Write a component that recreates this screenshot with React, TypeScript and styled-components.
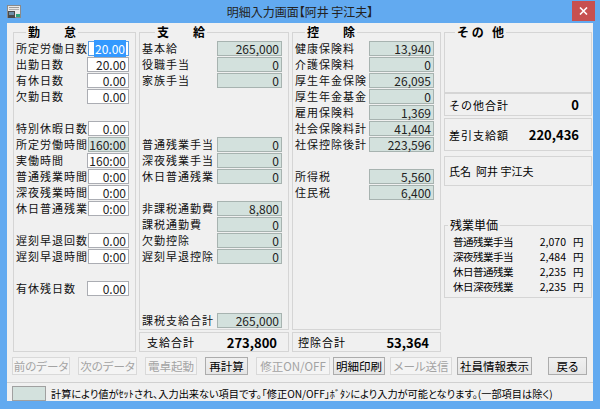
import React from 'react';
import styled, { createGlobalStyle } from 'styled-components';

type Item = { label: string; value: string; ro?: boolean; focus?: boolean } | null;

const kintai: Item[] = [
  { label: '所定労働日数', value: '20.00', focus: true },
  { label: '出勤日数', value: '20.00' },
  { label: '有休日数', value: '0.00' },
  { label: '欠勤日数', value: '0.00' },
  null,
  { label: '特別休暇日数', value: '0.00' },
  { label: '所定労働時間', value: '160:00', ro: true },
  { label: '実働時間', value: '160:00' },
  { label: '普通残業時間', value: '0:00' },
  { label: '深夜残業時間', value: '0:00' },
  { label: '休日普通残業', value: '0:00' },
  null,
  { label: '遅刻早退回数', value: '0.00' },
  { label: '遅刻早退時間', value: '0:00' },
  null,
  { label: '有休残日数', value: '0.00' },
];

const shikyu: Item[] = [
  { label: '基本給', value: '265,000', ro: true },
  { label: '役職手当', value: '0', ro: true },
  { label: '家族手当', value: '0', ro: true },
  null,
  null,
  null,
  { label: '普通残業手当', value: '0', ro: true },
  { label: '深夜残業手当', value: '0', ro: true },
  { label: '休日普通残業', value: '0', ro: true },
  null,
  { label: '非課税通勤費', value: '8,800', ro: true },
  { label: '課税通勤費', value: '0', ro: true },
  { label: '欠勤控除', value: '0', ro: true },
  { label: '遅刻早退控除', value: '0', ro: true },
  null,
  null,
  null,
  { label: '課税支給合計', value: '265,000', ro: true },
];

const kojo: Item[] = [
  { label: '健康保険料', value: '13,940', ro: true },
  { label: '介護保険料', value: '0', ro: true },
  { label: '厚生年金保険', value: '26,095', ro: true },
  { label: '厚生年金基金', value: '0', ro: true },
  { label: '雇用保険料', value: '1,369', ro: true },
  { label: '社会保険料計', value: '41,404', ro: true },
  { label: '社保控除後計', value: '223,596', ro: true },
  null,
  { label: '所得税', value: '5,560', ro: true },
  { label: '住民税', value: '6,400', ro: true },
];

const tanka = [
  { label: '普通残業手当', value: '2,070' },
  { label: '深夜残業手当', value: '2,484' },
  { label: '休日普通残業', value: '2,235' },
  { label: '休日深夜残業', value: '2,235' },
];

const buttons = [
  { label: '前のデータ', w: 58, ml: 5, disabled: true },
  { label: '次のデータ', w: 59, ml: 8, disabled: true },
  { label: '電卓起動', w: 52, ml: 8, disabled: true },
  { label: '再計算', w: 43, ml: 8 },
  { label: '修正ON/OFF', w: 74, ml: 8, disabled: true },
  { label: '明細印刷', w: 52, ml: 3 },
  { label: 'メール送信', w: 62, ml: 5, disabled: true },
  { label: '社員情報表示', w: 75, ml: 5 },
  { label: '戻る', w: 39, ml: 16 },
];

const GlobalStyle = createGlobalStyle`
  * { box-sizing: border-box; }
  html, body {
    margin: 0;
    padding: 0;
    background: #62aaf0;
  }
  body {
    font-family: "Noto Sans CJK JP", "Noto Sans", sans-serif;
    color: #000;
  }
`;

const Window = styled.div`
  width: 600px;
  height: 409px;
  background: #62aaf0;
  display: flex;
  flex-direction: column;
`;

const TitleBar = styled.div`
  height: 23px;
  display: grid;
  grid-template-columns: 1fr auto 1fr;
  align-items: center;
`;

const AppIcon = styled.svg`
  margin-left: 7px;
  display: block;
`;

const Title = styled.div`
  font-size: 12px;
  line-height: 16px;
  color: #222;
  white-space: pre;
  font-feature-settings: "palt";
`;

const CloseButton = styled.div`
  justify-self: end;
  align-self: start;
  width: 23px;
  height: 20px;
  margin-right: 5px;
  margin-top: 1px;
  background: #c75050;
  display: flex;
  align-items: center;
  justify-content: center;
`;

const Client = styled.div`
  flex: 1;
  margin: 0 7px 8px;
  background: #f0f0f0;
  display: flex;
  flex-direction: column;
`;

const Main = styled.div`
  display: flex;
  gap: 3px;
  height: 329px;
  padding: 2px 0 0 6px;
`;

const Column = styled.div<{ $w: number }>`
  width: ${p => p.$w}px;
  flex-shrink: 0;
  display: flex;
  flex-direction: column;
`;

const Group = styled.fieldset<{ $h?: number; $mt?: number }>`
  margin: ${p => p.$mt ?? 0}px 0 0;
  padding: 2px 6px 0 2px;
  border: 1px solid #d5d5d5;
  min-width: 0;
  ${p => (p.$h ? `height: ${p.$h}px; flex: none;` : 'flex: 1;')}
`;

const Legend = styled.legend<{ $ml: number; $plain?: boolean }>`
  margin-left: ${p => p.$ml}px;
  padding: 0 2px;
  font-size: 12px;
  line-height: 14px;
  font-weight: ${p => (p.$plain ? 400 : 700)};
  white-space: pre;
`;

const Row = styled.div`
  display: flex;
  align-items: center;
  justify-content: space-between;
  height: 15px;
  margin-bottom: 1px;
`;

const Spacer = styled.div`
  height: 16px;
`;

const Label = styled.span`
  font-size: 11px;
  letter-spacing: 1px;
  line-height: 15px;
  white-space: nowrap;
  color: #111;
`;

const Field = styled.div<{ $w: number; $ro?: boolean; $focus?: boolean }>`
  width: ${p => p.$w}px;
  height: 15px;
  border: 1px solid ${p => (p.$focus ? '#569de5' : p.$ro ? '#a7b3b0' : '#abadb3')};
  background: ${p => (p.$ro ? '#d3e1dd' : '#fff')};
  text-align: right;
  font-size: 12px;
  line-height: 13px;
  padding-right: 2px;
  color: #222;
  white-space: nowrap;
`;

const Selected = styled.span`
  background: #3399ff;
  color: #fff;
  padding: 0 1px;
`;

const TotalPanel = styled.div<{ $pl: number }>`
  height: 20px;
  margin-top: 2px;
  border: 1px solid #d5d5d5;
  display: flex;
  align-items: center;
  justify-content: space-between;
  padding: 0 11px 0 ${p => p.$pl}px;
  font-size: 11px;
  letter-spacing: 1px;
`;

const InfoPanel = styled.div<{ $h: number; $mt: number }>`
  height: ${p => p.$h}px;
  margin-top: ${p => p.$mt}px;
  border: 1px solid #d5d5d5;
  display: flex;
  align-items: center;
  justify-content: space-between;
  padding: 0 12px 0 4px;
  font-size: 11px;
  letter-spacing: 1px;
  white-space: pre;
`;

const NameText = styled.span`
  font-size: 11px;
  letter-spacing: 0;
  white-space: pre;
`;

const TotalValue = styled.span`
  font-size: 13px;
  font-weight: 700;
  letter-spacing: 0;
`;

const RateRow = styled.div`
  display: grid;
  grid-template-columns: 1fr auto 12px;
  column-gap: 7px;
  align-items: center;
  height: 15px;
  padding-left: 6px;
  font-size: 10.5px;
  letter-spacing: -0.5px;
`;

const RateValue = styled.span`
  letter-spacing: 0;
`;

const ButtonBar = styled.div`
  display: flex;
  height: 18px;
  margin-top: 5px;
`;

const Btn = styled.button<{ $w: number; $ml: number }>`
  width: ${p => p.$w}px;
  height: 18px;
  margin-left: ${p => p.$ml}px;
  padding: 0;
  font-family: inherit;
  font-size: 11.5px;
  line-height: 16px;
  font-feature-settings: "palt";
  white-space: nowrap;
  color: #000;
  border: 1px solid #acacac;
  background: linear-gradient(#f0f0f0, #e5e5e5);

  &:disabled {
    color: #a3a3a3;
    border-color: #d9d9d9;
    background: #f4f4f4;
  }
`;

const StatusBar = styled.div`
  flex: 1;
  margin-top: 7px;
  border-top: 1px solid #d0d0d0;
  display: flex;
  align-items: flex-start;
  padding: 3px 0 0 5px;
`;

const Swatch = styled.div`
  width: 34px;
  height: 15px;
  background: #d3e1dd;
  border: 1px solid #a0a0a0;
`;

const StatusText = styled.span`
  margin-left: 5px;
  font-size: 10.2px;
  line-height: 15px;
  font-feature-settings: "palt";
  white-space: nowrap;
`;

const ItemRows: React.FC<{ items: Item[]; w: number }> = ({ items, w }) => (
  <>
    {items.map((it, i) =>
      it ? (
        <Row key={i}>
          <Label>{it.label}</Label>
          <Field $w={w} $ro={it.ro} $focus={it.focus}>
            {it.focus ? <Selected>{it.value}</Selected> : it.value}
          </Field>
        </Row>
      ) : (
        <Spacer key={i} />
      )
    )}
  </>
);

const App: React.FC = () => (
  <>
    <GlobalStyle />
    <Window>
      <TitleBar>
        <AppIcon width="14" height="14" viewBox="0 0 14 14">
          <rect x="0.5" y="0.5" width="13" height="12" fill="#e8e8e8" stroke="#8a8a8a" />
          <rect x="2" y="2" width="10" height="1" fill="#9a9a9a" />
          <rect x="2" y="4" width="10" height="1" fill="#b0b0b0" />
          <rect x="1" y="6" width="7" height="7" fill="#4a4a4a" />
          <rect x="2" y="7" width="5" height="3" fill="#6c8ea8" />
          <rect x="9" y="9" width="4" height="3" fill="#2fa37a" />
        </AppIcon>
        <Title>明細入力画面【阿井 宇江夫】</Title>
        <CloseButton>
          <svg width="9" height="8" viewBox="0 0 9 8">
            <path d="M1 0.5 L8 7.5 M8 0.5 L1 7.5" stroke="#fff" strokeWidth="1.6" />
          </svg>
        </CloseButton>
      </TitleBar>
      <Client>
        <Main>
          <Column $w={123}>
            <Group>
              <Legend $ml={10}>{'勤　　怠'}</Legend>
              <ItemRows items={kintai} w={42} />
            </Group>
          </Column>
          <Column $w={150}>
            <Group>
              <Legend $ml={13}>{'支　　給'}</Legend>
              <ItemRows items={shikyu} w={65} />
            </Group>
            <TotalPanel $pl={7}>
              <span>支給合計</span>
              <TotalValue>273,800</TotalValue>
            </TotalPanel>
          </Column>
          <Column $w={149}>
            <Group>
              <Legend $ml={10}>{'控　　除'}</Legend>
              <ItemRows items={kojo} w={65} />
            </Group>
            <TotalPanel $pl={5}>
              <span>控除合計</span>
              <TotalValue>53,364</TotalValue>
            </TotalPanel>
          </Column>
          <Column $w={148}>
            <Group $h={68}>
              <Legend $ml={8}>{'そ の   他'}</Legend>
            </Group>
            <InfoPanel $h={23} $mt={0}>
              <span>その他合計</span>
              <TotalValue>0</TotalValue>
            </InfoPanel>
            <InfoPanel $h={33} $mt={2}>
              <span>差引支給額</span>
              <TotalValue>220,436</TotalValue>
            </InfoPanel>
            <InfoPanel $h={30} $mt={5}>
              <NameText>{'氏名  阿井 宇江夫'}</NameText>
            </InfoPanel>
            <Group $h={80} $mt={32}>
              <Legend $ml={1} $plain>残業単価</Legend>
              {tanka.map(r => (
                <RateRow key={r.label}>
                  <span>{r.label}</span>
                  <RateValue>{r.value}</RateValue>
                  <span>円</span>
                </RateRow>
              ))}
            </Group>
          </Column>
        </Main>
        <ButtonBar>
          {buttons.map(b => (
            <Btn key={b.label} $w={b.w} $ml={b.ml} disabled={b.disabled}>
              {b.label}
            </Btn>
          ))}
        </ButtonBar>
        <StatusBar>
          <Swatch />
          <StatusText>
            計算により値がｾｯﾄされ、入力出来ない項目です。「修正ON/OFF」ﾎﾞﾀﾝにより入力が可能となります。(一部項目は除く)
          </StatusText>
        </StatusBar>
      </Client>
    </Window>
  </>
);

export default App;
